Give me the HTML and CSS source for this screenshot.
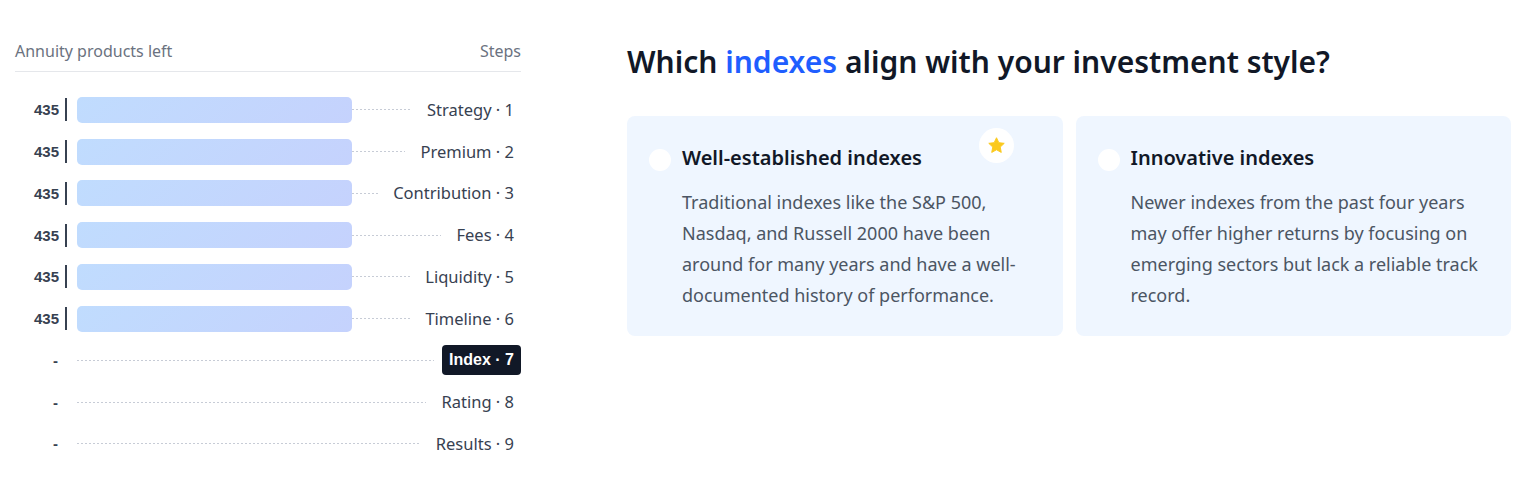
FILE: index.html
```html
<!DOCTYPE html>
<html lang="en">
<head>
<meta charset="utf-8">
<title>Index step</title>
<link rel="stylesheet" href="styles.css">
</head>
<body>
<div class="page">
  <aside class="progress">
    <div class="progress-head">
      <span>Annuity products left</span>
      <span>Steps</span>
    </div>
    <ol class="steps">
      <li class="step"><span class="count">435</span><span class="vline"></span><span class="bar"></span><span class="dots"></span><span class="label">Strategy · 1</span></li>
      <li class="step"><span class="count">435</span><span class="vline"></span><span class="bar"></span><span class="dots"></span><span class="label">Premium · 2</span></li>
      <li class="step"><span class="count">435</span><span class="vline"></span><span class="bar"></span><span class="dots"></span><span class="label">Contribution · 3</span></li>
      <li class="step"><span class="count">435</span><span class="vline"></span><span class="bar"></span><span class="dots"></span><span class="label">Fees · 4</span></li>
      <li class="step"><span class="count">435</span><span class="vline"></span><span class="bar"></span><span class="dots"></span><span class="label">Liquidity · 5</span></li>
      <li class="step"><span class="count">435</span><span class="vline"></span><span class="bar"></span><span class="dots"></span><span class="label">Timeline · 6</span></li>
      <li class="step empty"><span class="count">-</span><span class="vline none"></span><span class="dots"></span><span class="label active">Index · 7</span></li>
      <li class="step empty"><span class="count">-</span><span class="vline none"></span><span class="dots"></span><span class="label">Rating · 8</span></li>
      <li class="step empty"><span class="count">-</span><span class="vline none"></span><span class="dots"></span><span class="label">Results · 9</span></li>
    </ol>
  </aside>
  <main class="question">
    <h1 class="title">Which <span class="accent">indexes</span> align with your investment style?</h1>
    <div class="options">
      <div class="option">
        <span class="badge" aria-label="Recommended">
          <svg viewBox="0 0 24 24" width="19" height="19"><path fill="#fbc91e" d="M12 2.2l2.95 6.2 6.8.86-5 4.72 1.28 6.75L12 17.4l-6.03 3.33 1.28-6.75-5-4.72 6.8-.86z" stroke="#fbc91e" stroke-width="1.2" stroke-linejoin="round"/></svg>
        </span>
        <div class="option-head"><span class="radio"></span><span class="option-title">Well-established indexes</span></div>
        <p class="option-text">Traditional indexes like the S&amp;P 500, Nasdaq, and Russell 2000 have been around for many years and have a well-documented history of performance.</p>
      </div>
      <div class="option">
        <div class="option-head"><span class="radio"></span><span class="option-title">Innovative indexes</span></div>
        <p class="option-text">Newer indexes from the past four years may offer higher returns by focusing on emerging sectors but lack a reliable track record.</p>
      </div>
    </div>
  </main>
</div>
</body>
</html>
```
FILE: styles.css
```css
* { box-sizing: border-box; }
html, body { margin: 0; padding: 0; background: #fff; }
body { font-family: "Noto Sans", "Open Sans", sans-serif; color: #111827; }

.page {
  display: flex;
  padding: 40px 23px 0 15px;
  gap: 106px;
}

.progress { width: 506px; flex: none; }

.progress-head {
  display: flex;
  justify-content: space-between;
  font-size: 16px;
  line-height: 22px;
  color: #6b7280;
  padding-bottom: 9px;
  border-bottom: 1px solid #e5e7eb;
}

.steps { list-style: none; margin: 0; padding: 17px 0 0; }

.step {
  display: flex;
  align-items: center;
  height: 41.75px;
}

.count {
  width: 44px;
  text-align: right;
  font-family: "Liberation Sans", Arial, sans-serif;
  font-weight: 700;
  font-size: 15px;
  color: #374151;
}
.empty .count { padding-right: 1px; }

.vline {
  width: 2px;
  height: 23px;
  background: #374151;
  margin-left: 6px;
  margin-right: 10px;
}
.vline.none { background: transparent; }

.bar {
  width: 275px;
  height: 26px;
  border-radius: 5px;
  background: linear-gradient(135deg, #c0dcfe 0%, #c5d2fd 100%);
  flex: none;
}

.dots {
  flex: 1;
  height: 1px;
  background: repeating-linear-gradient(to right, #c7ccd6 0 2px, transparent 2px 4px);
  margin-right: 8px;
}

.label {
  font-size: 16.5px;
  line-height: 20px;
  color: #374151;
  padding: 5px 7px;
  border-radius: 4px;
  white-space: nowrap;
}
.label.active {
  background: #111827;
  color: #fff;
  font-family: "Liberation Sans", Arial, sans-serif;
  font-weight: 700;
  font-size: 16px;
  padding: 5px 7px;
}

.question { flex: 1; padding-top: 0; }

.title {
  margin: 0;
  font-size: 30px;
  line-height: 44px;
  font-weight: 600;
  color: #111827;
  letter-spacing: 0;
}
.accent { color: #1f5eff; }

.options {
  display: grid;
  grid-template-columns: 1fr 1fr;
  gap: 13px;
  margin-top: 32px;
}

.option {
  position: relative;
  background: #eff6ff;
  border-radius: 8px;
  padding: 28px 22px 25px 22px;
  height: 220px;
}

.badge {
  position: absolute;
  top: 12px;
  right: 49px;
  width: 35px;
  height: 35px;
  border-radius: 50%;
  background: #fff;
  display: flex;
  align-items: center;
  justify-content: center;
}

.option-head {
  display: flex;
  align-items: center;
  gap: 11px;
}
.radio {
  width: 22px;
  height: 22px;
  border-radius: 50%;
  background: #fff;
  flex: none;
  margin-top: 4px;
}
.option-title {
  font-size: 20px;
  line-height: 28px;
  font-weight: 600;
  color: #111827;
}

.option-text {
  margin: 15px 0 0 33px;
  font-size: 18px;
  line-height: 31px;
  color: #4b5563;
}
```
